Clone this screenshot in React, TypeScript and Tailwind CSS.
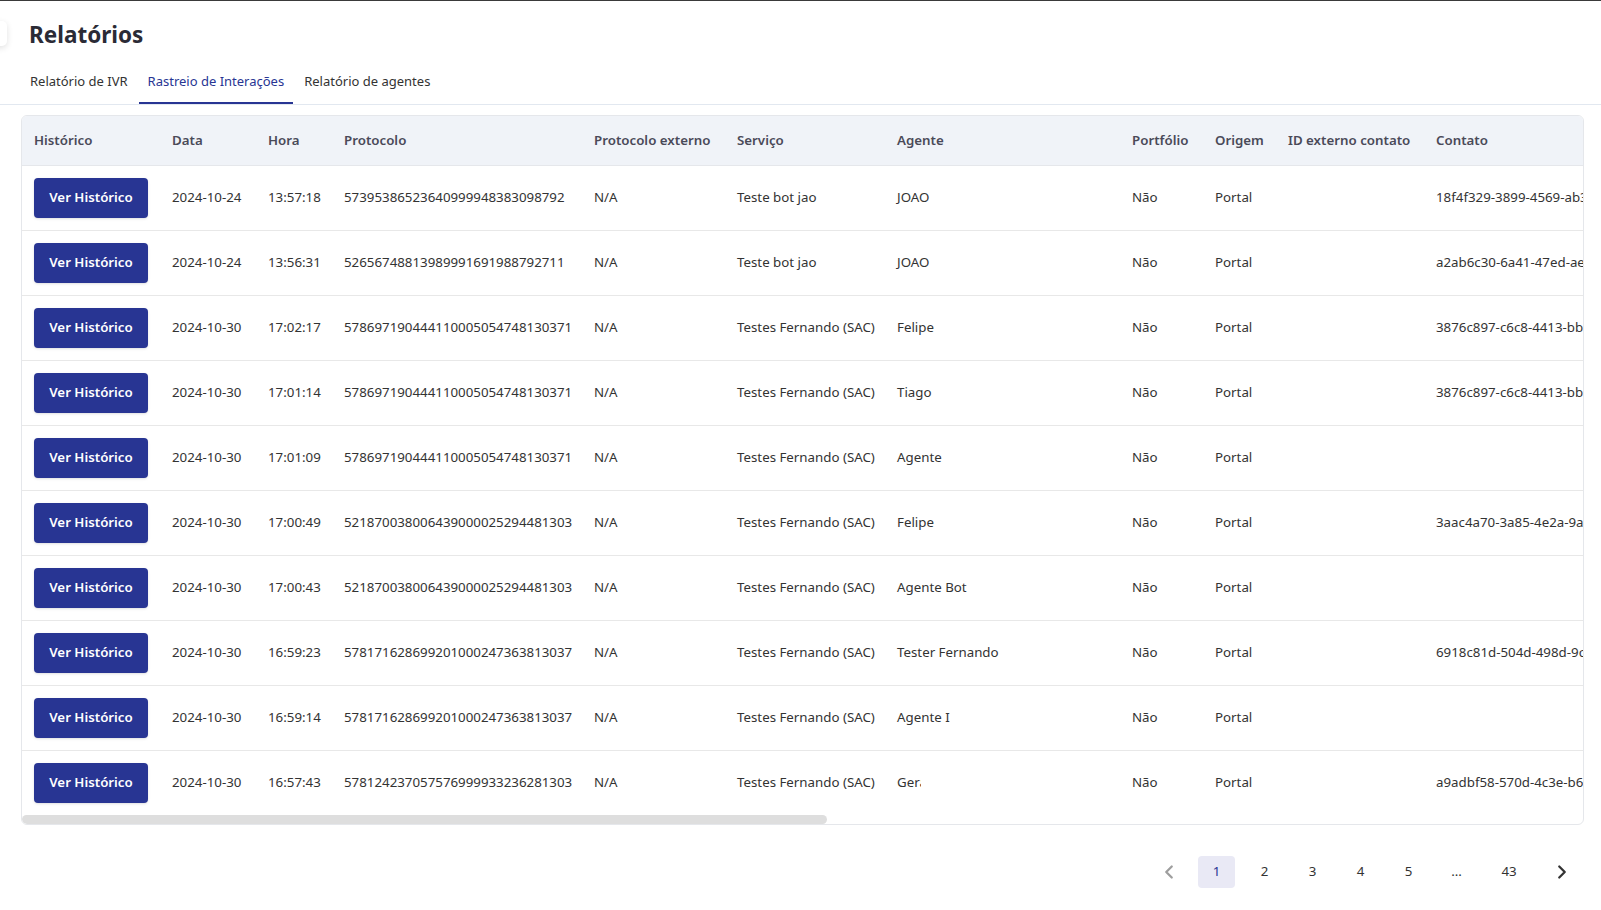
import { ChevronLeft, ChevronRight } from 'lucide-react';

type Row = {
    data: string;
    hora: string;
    protocolo: string;
    servico: string;
    agente: string;
    contato: string;
};

const rows: Row[] = [
    { data: '2024-10-24', hora: '13:57:18', protocolo: '57395386523640999948383098792', servico: 'Teste bot jao', agente: 'JOAO', contato: '18f4f329-3899-4569-ab3e-7d21c0e5f9a1' },
    { data: '2024-10-24', hora: '13:56:31', protocolo: '52656748813989991691988792711', servico: 'Teste bot jao', agente: 'JOAO', contato: 'a2ab6c30-6a41-47ed-ae19-0c4b5d8e2f73' },
    { data: '2024-10-30', hora: '17:02:17', protocolo: '578697190444110005054748130371', servico: 'Testes Fernando (SAC)', agente: 'Felipe', contato: '3876c897-c6c8-4413-bb02-9f1e6a7d4c55' },
    { data: '2024-10-30', hora: '17:01:14', protocolo: '578697190444110005054748130371', servico: 'Testes Fernando (SAC)', agente: 'Tiago', contato: '3876c897-c6c8-4413-bb02-9f1e6a7d4c55' },
    { data: '2024-10-30', hora: '17:01:09', protocolo: '578697190444110005054748130371', servico: 'Testes Fernando (SAC)', agente: 'Agente', contato: '' },
    { data: '2024-10-30', hora: '17:00:49', protocolo: '521870038006439000025294481303', servico: 'Testes Fernando (SAC)', agente: 'Felipe', contato: '3aac4a70-3a85-4e2a-9a61-5b7c8d0e1f22' },
    { data: '2024-10-30', hora: '17:00:43', protocolo: '521870038006439000025294481303', servico: 'Testes Fernando (SAC)', agente: 'Agente Bot', contato: '' },
    { data: '2024-10-30', hora: '16:59:23', protocolo: '578171628699201000247363813037', servico: 'Testes Fernando (SAC)', agente: 'Tester Fernando', contato: '6918c81d-504d-498d-9c3a-1e2f4b6d8a90' },
    { data: '2024-10-30', hora: '16:59:14', protocolo: '578171628699201000247363813037', servico: 'Testes Fernando (SAC)', agente: 'Agente I', contato: '' },
    { data: '2024-10-30', hora: '16:57:43', protocolo: '578124237057576999933236281303', servico: 'Testes Fernando (SAC)', agente: 'Geral', contato: 'a9adbf58-570d-4c3e-b6f1-2d3c4e5f6a7b' },
];

const columns = [
    { label: 'Histórico', w: 'w-[138px]' },
    { label: 'Data', w: 'w-[96px]' },
    { label: 'Hora', w: 'w-[76px]' },
    { label: 'Protocolo', w: 'w-[250px]' },
    { label: 'Protocolo externo', w: 'w-[143px]' },
    { label: 'Serviço', w: 'w-[160px]' },
    { label: 'Agente', w: 'w-[235px]' },
    { label: 'Portfólio', w: 'w-[83px]' },
    { label: 'Origem', w: 'w-[73px]' },
    { label: 'ID externo contato', w: 'w-[148px]' },
    { label: 'Contato', w: 'w-[300px]' },
    { label: 'E-mail', w: 'w-[260px]' },
    { label: 'Telefone', w: 'w-[160px]' },
    { label: 'Canal', w: 'w-[120px]' },
    { label: 'Duração', w: 'w-[120px]' },
    { label: 'Status', w: 'w-[140px]' },
    { label: 'Finalizado por', w: 'w-[160px]' },
    { label: 'Tags', w: 'w-[368px]' },
];

const tabs = ['Relatório de IVR', 'Rastreio de Interações', 'Relatório de agentes'];
const pages = ['1', '2', '3', '4', '5', '...', '43'];

export default function App() {
    return (
        <div className="relative min-h-[910px] bg-white border-t border-[#3a3a3a] font-['Noto_Sans','Open_Sans',sans-serif] text-[#333]">
            {/* collapsed sidebar handle */}
            <div className="absolute left-[-12px] top-[20px] w-[19px] h-[25px] bg-white rounded-[5px] shadow-[0_2px_6px_rgba(0,0,0,0.12)]" />

            <div className="pl-[29px] pt-[18px]">
                <h1 className="text-[22.5px] leading-[32px] font-bold text-[#2b2b36]">Relatórios</h1>
            </div>

            {/* Tabs */}
            <div className="mt-[12px] flex gap-[2px] pl-[21px] border-b border-[#e2e8f0]">
                {tabs.map((t, i) => (
                    <button
                        key={t}
                        className={`px-[9px] pt-[8px] pb-[11px] text-[13px] leading-[20px] border-b-2 ${i === 1 ? 'border-[#283593] text-[#283593]' : 'border-transparent text-[#333]'}`}
                    >
                        {t}
                    </button>
                ))}
            </div>

            {/* Table card */}
            <div className="mt-[10px] ml-[21px] mr-[17px] border border-[#e5e7eb] rounded-[6px] overflow-hidden">
                <div className="overflow-hidden">
                    <table className="table-fixed w-[3030px] text-[13.3px] text-left">
                        <thead>
                            <tr className="bg-[#f0f3f8]">
                                {columns.map((c) => (
                                    <th
                                        key={c.label}
                                        className={`${c.w} h-[49px] px-[12px] pt-[2px] border-b border-[#e5e7eb] font-semibold text-[#4a4a58] whitespace-nowrap`}
                                    >
                                        {c.label}
                                    </th>
                                ))}
                            </tr>
                        </thead>
                        <tbody>
                            {rows.map((r, i) => {
                                const border = i < rows.length - 1 ? 'border-b border-[#e8e8e8]' : '';
                                const cell = `h-[65px] px-[12px] whitespace-nowrap ${border}`;
                                return (
                                    <tr key={i}>
                                        <td className={cell}>
                                            <button className="w-[114px] h-[40px] rounded-[4px] bg-[#283593] text-white font-semibold text-[13.3px] shadow-sm">
                                                Ver Histórico
                                            </button>
                                        </td>
                                        <td className={cell}>{r.data}</td>
                                        <td className={cell}>{r.hora}</td>
                                        <td className={cell}>{r.protocolo}</td>
                                        <td className={cell}>N/A</td>
                                        <td className={cell}>{r.servico}</td>
                                        <td className={cell}>
                                            {r.agente === 'Geral' ? (
                                                <span className="inline-block max-w-[24px] overflow-hidden align-bottom">Geral</span>
                                            ) : (
                                                r.agente
                                            )}
                                        </td>
                                        <td className={cell}>Não</td>
                                        <td className={cell}>Portal</td>
                                        <td className={cell}></td>
                                        <td className={cell}>{r.contato}</td>
                                        <td className={cell}></td>
                                        <td className={cell}></td>
                                        <td className={cell}></td>
                                        <td className={cell}></td>
                                        <td className={cell}></td>
                                        <td className={cell}></td>
                                        <td className={cell}></td>
                                    </tr>
                                );
                            })}
                        </tbody>
                    </table>
                </div>
                {/* horizontal scrollbar */}
                <div className="h-[9px]">
                    <div className="h-full w-[805px] rounded-full bg-[#dedede]" />
                </div>
            </div>

            {/* Pagination */}
            <div className="mt-[31px] flex justify-end items-center gap-[11px] pr-[21px]">
                <button className="w-[37px] h-[32px] flex items-center justify-center text-[#9e9e9e]">
                    <ChevronLeft className="w-[22px] h-[22px]" strokeWidth={2.5} />
                </button>
                {pages.map((p) => (
                    <button
                        key={p}
                        className={`h-[32px] rounded-[4px] text-[13.3px] flex items-center justify-center ${p === '43' ? 'min-w-[46px]' : 'min-w-[37px]'} ${p === '1' ? 'bg-[#e9e9f5] text-[#283593]' : 'text-[#333]'}`}
                    >
                        {p}
                    </button>
                ))}
                <button className="w-[37px] h-[32px] flex items-center justify-center text-[#333]">
                    <ChevronRight className="w-[22px] h-[22px]" strokeWidth={2.5} />
                </button>
            </div>
        </div>
    );
}
